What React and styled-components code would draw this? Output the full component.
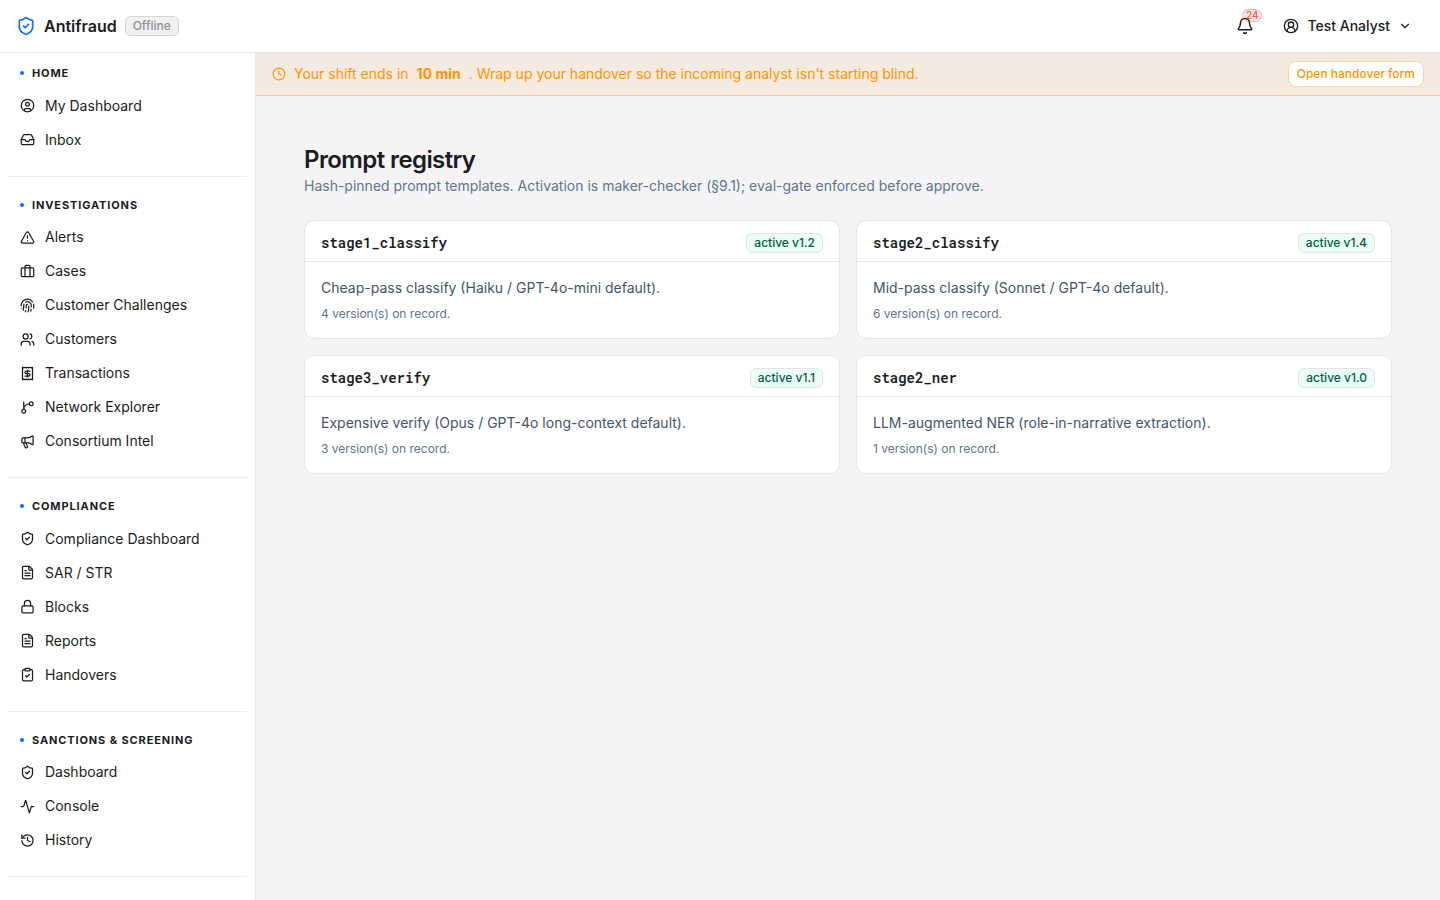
import React from "react";
import styled, { createGlobalStyle } from "styled-components";
import {
  Activity,
  Bell,
  Briefcase,
  ChevronDown,
  CircleUser,
  CircleUserRound,
  ClipboardCheck,
  Clock,
  FileText,
  Fingerprint,
  History,
  Inbox,
  Lock,
  Megaphone,
  ShieldCheck,
  TriangleAlert,
  Users,
} from "lucide-react";

const GlobalStyle = createGlobalStyle`
  *, *::before, *::after {
    box-sizing: border-box;
  }

  body {
    margin: 0;
    background: #f4f4f7;
    color: #1c1c1e;
    font-family: Inter, "Liberation Sans", sans-serif;
    font-size: 14px;
    line-height: 20px;
  }

  h1, h2, h3, p, ul {
    margin: 0;
    padding: 0;
  }

  button {
    font-family: inherit;
    cursor: pointer;
  }
`;

const Shell = styled.div`
  display: flex;
  flex-direction: column;
  height: 100vh;
`;

const Header = styled.header`
  display: flex;
  align-items: center;
  justify-content: space-between;
  min-height: 53px;
  padding: 0 16px;
  background: #fff;
  border-bottom: 1px solid #e5e5ea;
`;

const Brand = styled.div`
  display: flex;
  align-items: center;
  gap: 8px;
  font-size: 16px;
  font-weight: 600;

  svg {
    color: #0a6cff;
  }
`;

const Tag = styled.span`
  height: 20px;
  padding: 0 7px;
  border: 1px solid ${(props) => (props.$active ? "#e2e5e6" : "#d6d6d6")};
  border-radius: 6px;
  background: ${(props) => (props.$active ? "#ecfdf5" : "#f1f1f1")};
  color: ${(props) => (props.$active ? "#006045" : "#8e8e93")};
  font-size: 12px;
  font-weight: 500;
  line-height: 18px;
  white-space: nowrap;
`;

const HeaderActions = styled.div`
  display: flex;
  align-items: center;
  gap: 8px;
`;

const BellButton = styled.button`
  position: relative;
  display: flex;
  padding: 9px;
  border: 0;
  background: none;
  color: #1c1c1e;
`;

const Count = styled.span`
  position: absolute;
  top: 1px;
  right: 1px;
  height: 13px;
  padding: 0 3px;
  border: 1px solid rgba(255, 59, 48, 0.3);
  border-radius: 7px;
  background: rgba(255, 59, 48, 0.12);
  color: #ff3b30;
  font-size: 10px;
  line-height: 11px;
`;

const UserButton = styled.button`
  display: flex;
  align-items: center;
  gap: 8px;
  padding: 6px 12px;
  border: 0;
  background: none;
  color: #1c1c1e;
  font-size: 14px;
  font-weight: 500;
  line-height: 20px;
`;

const Body = styled.div`
  display: flex;
  flex: 1;
  min-height: 0;
`;

const Sidebar = styled.nav`
  flex: 0 0 256px;
  padding: 12px 8px;
  overflow: hidden;
  background: #fff;
  border-right: 1px solid #e5e5ea;
`;

const Section = styled.section`
  padding-bottom: 20px;
  margin-bottom: 20px;
  border-bottom: 1px solid #ededf0;
`;

const SectionTitle = styled.h3`
  display: flex;
  align-items: center;
  gap: 8px;
  padding: 0 12px;
  margin-bottom: 8px;
  font-size: 11px;
  font-weight: 700;
  line-height: 1.5;
  letter-spacing: 0.08em;
  text-transform: uppercase;

  &::before {
    content: "";
    width: 4px;
    height: 4px;
    border-radius: 50%;
    background: #0a6cff;
  }
`;

const NavList = styled.ul`
  display: flex;
  flex-direction: column;
  gap: 2px;
  list-style: none;
`;

const NavLink = styled.a`
  display: flex;
  align-items: center;
  gap: 10px;
  height: 32px;
  padding: 0 12px;
  border-radius: 8px;
  color: inherit;
  text-decoration: none;
`;

const Main = styled.main`
  flex: 1;
  min-width: 0;
  overflow: auto;
`;

const Banner = styled.div`
  display: flex;
  align-items: center;
  gap: 8px;
  padding: 8px 16px;
  background: #f5eadf;
  border-bottom: 1px solid #facf96;
  color: #ff9500;
`;

const BannerButton = styled.button`
  margin-left: auto;
  padding: 4px 8px;
  border: 1px solid #ffd699;
  border-radius: 8px;
  background: #fff;
  color: #ff9500;
  font-size: 12px;
  font-weight: 500;
  line-height: 16px;
`;

const Page = styled.div`
  padding: 48px;
`;

const PageTitle = styled.h1`
  font-size: 24px;
  font-weight: 600;
  line-height: 32px;
  letter-spacing: -0.025em;
`;

const PageText = styled.p`
  margin-bottom: 24px;
  color: #62748e;
`;

const Grid = styled.div`
  display: grid;
  grid-template-columns: repeat(2, minmax(0, 1fr));
  gap: 16px;
`;

const Card = styled.article`
  border: 1px solid #e5e5ea;
  border-radius: 10px;
  background: #fff;
`;

const CardHeader = styled.div`
  display: flex;
  align-items: center;
  justify-content: space-between;
  padding: 12px 16px 8px;
  border-bottom: 1px solid #e5e5ea;
`;

const CardTitle = styled.h2`
  font-family: "Roboto Mono", "Liberation Mono", monospace;
  font-size: 14px;
  font-weight: 600;
`;

const CardBody = styled.div`
  padding: 16px;
  color: #45556c;
`;

const Versions = styled.p`
  margin-top: 8px;
  color: #62748e;
  font-size: 12px;
  line-height: 16px;
`;

const StrokeIcon = styled.svg.attrs({
  viewBox: "0 0 24 24",
  fill: "none",
  stroke: "currentColor",
  strokeWidth: 2,
  strokeLinecap: "round",
  strokeLinejoin: "round",
})``;

const BranchIcon = ({ size }) => (
  <StrokeIcon width={size} height={size}>
    <path d="M15 6a9 9 0 0 0-9 9V3" />
    <circle cx="18" cy="6" r="3" />
    <circle cx="6" cy="18" r="3" />
  </StrokeIcon>
);

const ReceiptIcon = ({ size }) => (
  <StrokeIcon width={size} height={size}>
    <path d="M4 2v20l2-1 2 1 2-1 2 1 2-1 2 1 2-1 2 1V2l-2 1-2-1-2 1-2-1-2 1-2-1-2 1Z" />
    <path d="M16 8h-6a2 2 0 1 0 0 4h4a2 2 0 1 1 0 4H8" />
    <path d="M12 17.5v-11" />
  </StrokeIcon>
);

const sections = [
  {
    title: "Home",
    items: [
      ["My Dashboard", CircleUser],
      ["Inbox", Inbox],
    ],
  },
  {
    title: "Investigations",
    items: [
      ["Alerts", TriangleAlert],
      ["Cases", Briefcase],
      ["Customer Challenges", Fingerprint],
      ["Customers", Users],
      ["Transactions", ReceiptIcon],
      ["Network Explorer", BranchIcon],
      ["Consortium Intel", Megaphone],
    ],
  },
  {
    title: "Compliance",
    items: [
      ["Compliance Dashboard", ShieldCheck],
      ["SAR / STR", FileText],
      ["Blocks", Lock],
      ["Reports", FileText],
      ["Handovers", ClipboardCheck],
    ],
  },
  {
    title: "Sanctions & Screening",
    items: [
      ["Dashboard", ShieldCheck],
      ["Console", Activity],
      ["History", History],
    ],
  },
];

const prompts = [
  {
    name: "stage1_classify",
    version: "1.2",
    text: "Cheap-pass classify (Haiku / GPT-4o-mini default).",
    count: 4,
  },
  {
    name: "stage2_classify",
    version: "1.4",
    text: "Mid-pass classify (Sonnet / GPT-4o default).",
    count: 6,
  },
  {
    name: "stage3_verify",
    version: "1.1",
    text: "Expensive verify (Opus / GPT-4o long-context default).",
    count: 3,
  },
  {
    name: "stage2_ner",
    version: "1.0",
    text: "LLM-augmented NER (role-in-narrative extraction).",
    count: 1,
  },
];

const PromptCard = ({ name, version, text, count }) => (
  <Card>
    <CardHeader>
      <CardTitle>{name}</CardTitle>
      <Tag $active>active v{version}</Tag>
    </CardHeader>
    <CardBody>
      <p>{text}</p>
      <Versions>{count} version(s) on record.</Versions>
    </CardBody>
  </Card>
);

const App = () => (
  <>
    <GlobalStyle />
    <Shell>
      <Header>
        <Brand>
          <ShieldCheck size={20} />
          <span>Antifraud</span>
          <Tag>Offline</Tag>
        </Brand>
        <HeaderActions>
          <BellButton aria-label="Notifications">
            <Bell size={18} />
            <Count>24</Count>
          </BellButton>
          <UserButton>
            <CircleUserRound size={16} />
            Test Analyst
            <ChevronDown size={14} />
          </UserButton>
        </HeaderActions>
      </Header>
      <Body>
        <Sidebar>
          {sections.map((section) => (
            <Section key={section.title}>
              <SectionTitle>{section.title}</SectionTitle>
              <NavList>
                {section.items.map(([label, Icon]) => (
                  <li key={label}>
                    <NavLink href="#">
                      <Icon size={15} />
                      {label}
                    </NavLink>
                  </li>
                ))}
              </NavList>
            </Section>
          ))}
        </Sidebar>
        <Main>
          <Banner>
            <Clock size={14} />
            <span>Your shift ends in</span>
            <strong>10 min</strong>
            <span>
              . Wrap up your handover so the incoming analyst isn't starting
              blind.
            </span>
            <BannerButton>Open handover form</BannerButton>
          </Banner>
          <Page>
            <PageTitle>Prompt registry</PageTitle>
            <PageText>
              Hash-pinned prompt templates. Activation is maker-checker (§9.1);
              eval-gate enforced before approve.
            </PageText>
            <Grid>
              {prompts.map((prompt) => (
                <PromptCard key={prompt.name} {...prompt} />
              ))}
            </Grid>
          </Page>
        </Main>
      </Body>
    </Shell>
  </>
);
export default App;
